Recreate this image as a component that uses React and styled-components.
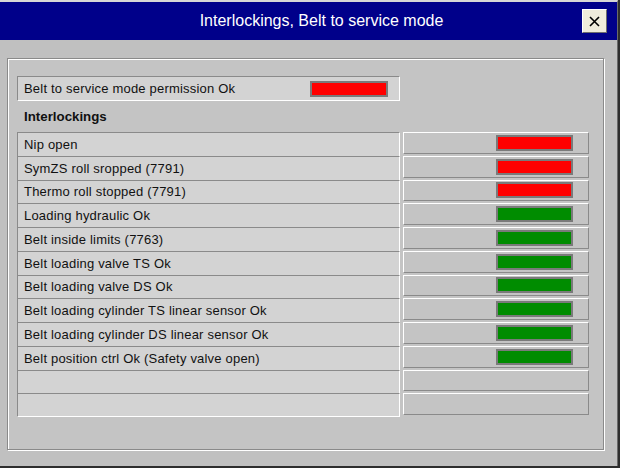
import React from "react";
import styled, { createGlobalStyle } from "styled-components";

const Global = createGlobalStyle`
  html, body { margin: 0; padding: 0; background: #2e2e2e; }
  body { font-family: "Liberation Sans", Arial, sans-serif; }
  * { box-sizing: border-box; }
`;

const Window = styled.div`
  width: 618px;
  height: 466px;
  background: #c0c0c0;
  border-top: 2px solid #d6d6d6;
  border-right: 1px solid #6a6a6a;
  display: flex;
  flex-direction: column;
`;

const TitleBar = styled.div`
  height: 38px;
  background: #00008a;
  display: flex;
  align-items: center;
  justify-content: center;
  position: relative;
`;

const Title = styled.div`
  color: #ffffff;
  font-size: 16px;
  padding-left: 26px;
`;

const CloseButton = styled.button`
  position: absolute;
  right: 10px;
  top: 7px;
  width: 25px;
  height: 24px;
  padding: 0;
  margin: 0;
  background: #efecdc;
  border: 1px solid;
  border-color: #ffffff #6e6e6e #6e6e6e #ffffff;
  display: flex;
  align-items: center;
  justify-content: center;
`;

const Body = styled.div`
  flex: 1;
  padding: 18px 13px 16px 7px;
  display: flex;
`;

const Frame = styled.div`
  flex: 1;
  border: 1px solid #8a8a8a;
  box-shadow: inset 1px 1px 0 #ffffff, 1px 1px 0 #ffffff;
  background: #c4c4c4;
  padding: 17px 0 0 9px;
  display: flex;
  flex-direction: column;
`;

const PermissionBox = styled.div`
  width: 383px;
  height: 25px;
  background: #d3d3d3;
  border: 1px solid;
  border-color: #8a8a8a #ffffff #ffffff #8a8a8a;
  display: flex;
  align-items: center;
  justify-content: space-between;
  padding: 0 11px 0 6px;
`;

const Label = styled.span`
  font-size: 13px;
  color: #111;
  letter-spacing: 0.2px;
  white-space: nowrap;
`;

const Heading = styled.div`
  height: 31px;
  display: flex;
  align-items: center;
  padding-left: 7px;
  font-size: 13.3px;
  font-weight: bold;
  color: #111;
`;

const Table = styled.div`
  display: grid;
  grid-template-columns: 383px 186px;
  grid-template-rows: repeat(12, 1fr);
  column-gap: 3px;
  height: 285px;
`;

const NameCell = styled.div`
  background: #d3d3d3;
  border-top: 1px solid #8a8a8a;
  border-left: 1px solid #8a8a8a;
  border-right: 1px solid #ffffff;
  border-bottom: ${(p) => (p.$last ? "1px solid #ffffff" : "none")};
  display: flex;
  align-items: center;
  padding-left: 6px;
`;

const StateCell = styled.div`
  background: #c4c4c4;
  border: 1px solid;
  border-color: #ffffff #8a8a8a #8a8a8a #ffffff;
  margin-bottom: 2px;
  display: flex;
  align-items: center;
  justify-content: flex-end;
  padding-right: 15px;
`;

const Lamp = styled.div`
  width: ${(p) => p.$w}px;
  height: 16px;
  background: ${(p) => (p.$on ? "#008c00" : "#ff0000")};
  border: 2px solid #7a7a7a;
`;

const rows = [
  ["Nip open", false],
  ["SymZS roll sropped (7791)", false],
  ["Thermo roll stopped (7791)", false],
  ["Loading hydraulic Ok", true],
  ["Belt inside limits (7763)", true],
  ["Belt loading valve TS Ok", true],
  ["Belt loading valve DS Ok", true],
  ["Belt loading cylinder TS linear sensor Ok", true],
  ["Belt loading cylinder DS linear sensor Ok", true],
  ["Belt position ctrl Ok (Safety valve open)", true],
  ["", null],
  ["", null],
];

export default function App() {
  return (
    <>
      <Global />
      <Window>
        <TitleBar>
          <Title>Interlockings, Belt to service mode</Title>
          <CloseButton aria-label="Close">
            <svg width="11" height="11" viewBox="0 0 11 11">
              <path d="M1 1 L10 10 M10 1 L1 10" stroke="#000" strokeWidth="1.6" fill="none" />
            </svg>
          </CloseButton>
        </TitleBar>
        <Body>
          <Frame>
            <PermissionBox>
              <Label>Belt to service mode permission Ok</Label>
              <Lamp $w={78} $on={false} />
            </PermissionBox>
            <Heading>Interlockings</Heading>
            <Table>
              {rows.map(([name, on], i) => (
                <React.Fragment key={i}>
                  <NameCell $last={i === rows.length - 1}>
                    <Label>{name}</Label>
                  </NameCell>
                  <StateCell>{on !== null && <Lamp $w={77} $on={on} />}</StateCell>
                </React.Fragment>
              ))}
            </Table>
          </Frame>
        </Body>
      </Window>
    </>
  );
}
